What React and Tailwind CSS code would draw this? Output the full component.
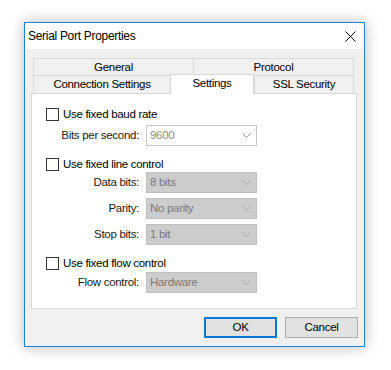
const font = { fontFamily: '"Segoe UI", "Liberation Sans", Arial, sans-serif' }

function Chevron() {
  return (
    <svg width="9" height="5" viewBox="0 0 9 5" className="shrink-0">
      <path d="M0.5 0.5 L4.5 4.5 L8.5 0.5" fill="none" stroke="#a8a8a8" strokeWidth="1" />
    </svg>
  )
}

function CloseIcon() {
  return (
    <svg width="11" height="11" viewBox="0 0 11 11">
      <path d="M0.5 0.5 L10.5 10.5 M10.5 0.5 L0.5 10.5" fill="none" stroke="#000" strokeWidth="1" />
    </svg>
  )
}

function Select({ value, disabled = true }) {
  return (
    <div
      className={
        disabled
          ? 'flex h-[21px] w-[111px] items-center justify-between border border-[#bfbfbf] bg-[#cccccc] pl-[3px] pr-[5px] text-[#7a7a7a]'
          : 'flex h-[21px] w-[111px] items-center justify-between border border-[#c8c8c8] bg-white pl-[3px] pr-[5px] text-[#8a8a8a]'
      }
    >
      <span>{value}</span>
      <Chevron />
    </div>
  )
}

function Field({ label, value, disabled }) {
  return (
    <div className="flex items-center">
      <span className="w-[100px] pr-[7px] text-right text-[#1a1a1a]">{label}</span>
      <Select value={value} disabled={disabled} />
    </div>
  )
}

function Check({ label }) {
  return (
    <div className="flex items-center gap-[4px]">
      <div className="h-[13px] w-[13px] border border-[#333333] bg-white" />
      <span className="text-black">{label}</span>
    </div>
  )
}

function Tab({ label, w }) {
  return (
    <div
      className={
        'flex h-[18px] items-center justify-center border-l border-t border-[#d9d9d9] bg-[#f0f0f0] text-black last:border-r ' +
        w
      }
    >
      {label}
    </div>
  )
}

export default function App() {
  return (
    <div
      className="h-[370px] w-[391px] bg-white pl-[24px] pt-[22px] text-[11.5px] leading-none tracking-[-0.3px]"
      style={font}
    >
      <div className="flex h-[325px] w-[341px] flex-col border border-[#1883d7] bg-[#f0f0f0] shadow-[0_0_14px_rgba(0,0,0,0.28)]">
        {/* title bar */}
        <div className="flex h-[26px] shrink-0 items-center justify-between bg-white pl-[3px] pr-[8px]">
          <span className="text-[12px] text-black">Serial Port Properties</span>
          <CloseIcon />
        </div>

        <div className="flex flex-col px-[6px] pt-[9px]">
          {/* tabs */}
          <div className="flex flex-col px-[2px]">
            <div className="flex">
              <Tab label="General" w="w-[160px]" />
              <Tab label="Protocol" w="w-[161px]" />
            </div>
            <div className="flex h-[17px] items-end">
              <Tab label="Connection Settings" w="w-[137px] h-[17px]" />
              <div className="relative z-10 -mb-[1px] flex h-[20px] w-[84px] items-center justify-center border-x border-t border-[#d9d9d9] bg-white pb-[2px] text-black">
                Settings
              </div>
              <Tab label="SSL Security" w="w-[100px] h-[17px]" />
            </div>
          </div>

          {/* panel */}
          <div className="flex h-[216px] w-[326px] flex-col border border-[#d9d9d9] bg-white pl-[14px] pt-[14px]">
            <Check label="Use fixed baud rate" />
            <div className="mt-[4px]">
              <Field label="Bits per second:" value="9600" disabled={false} />
            </div>
            <div className="mt-[12px]">
              <Check label="Use fixed line control" />
            </div>
            <div className="mt-[1px] flex flex-col gap-[5px]">
              <Field label="Data bits:" value="8 bits" />
              <Field label="Parity:" value="No parity" />
              <Field label="Stop bits:" value="1 bit" />
            </div>
            <div className="mt-[12px]">
              <Check label="Use fixed flow control" />
            </div>
            <div className="mt-[2px]">
              <Field label="Flow control:" value="Hardware" />
            </div>
          </div>

          {/* buttons */}
          <div className="mt-[8px] flex justify-end gap-[8px]">
            <button className="flex h-[21px] w-[73px] items-center justify-center border-2 border-[#0078d7] bg-[#e1e1e1] text-black">
              OK
            </button>
            <button className="flex h-[21px] w-[73px] items-center justify-center border border-[#adadad] bg-[#e1e1e1] text-black">
              Cancel
            </button>
          </div>
        </div>
      </div>
    </div>
  )
}
